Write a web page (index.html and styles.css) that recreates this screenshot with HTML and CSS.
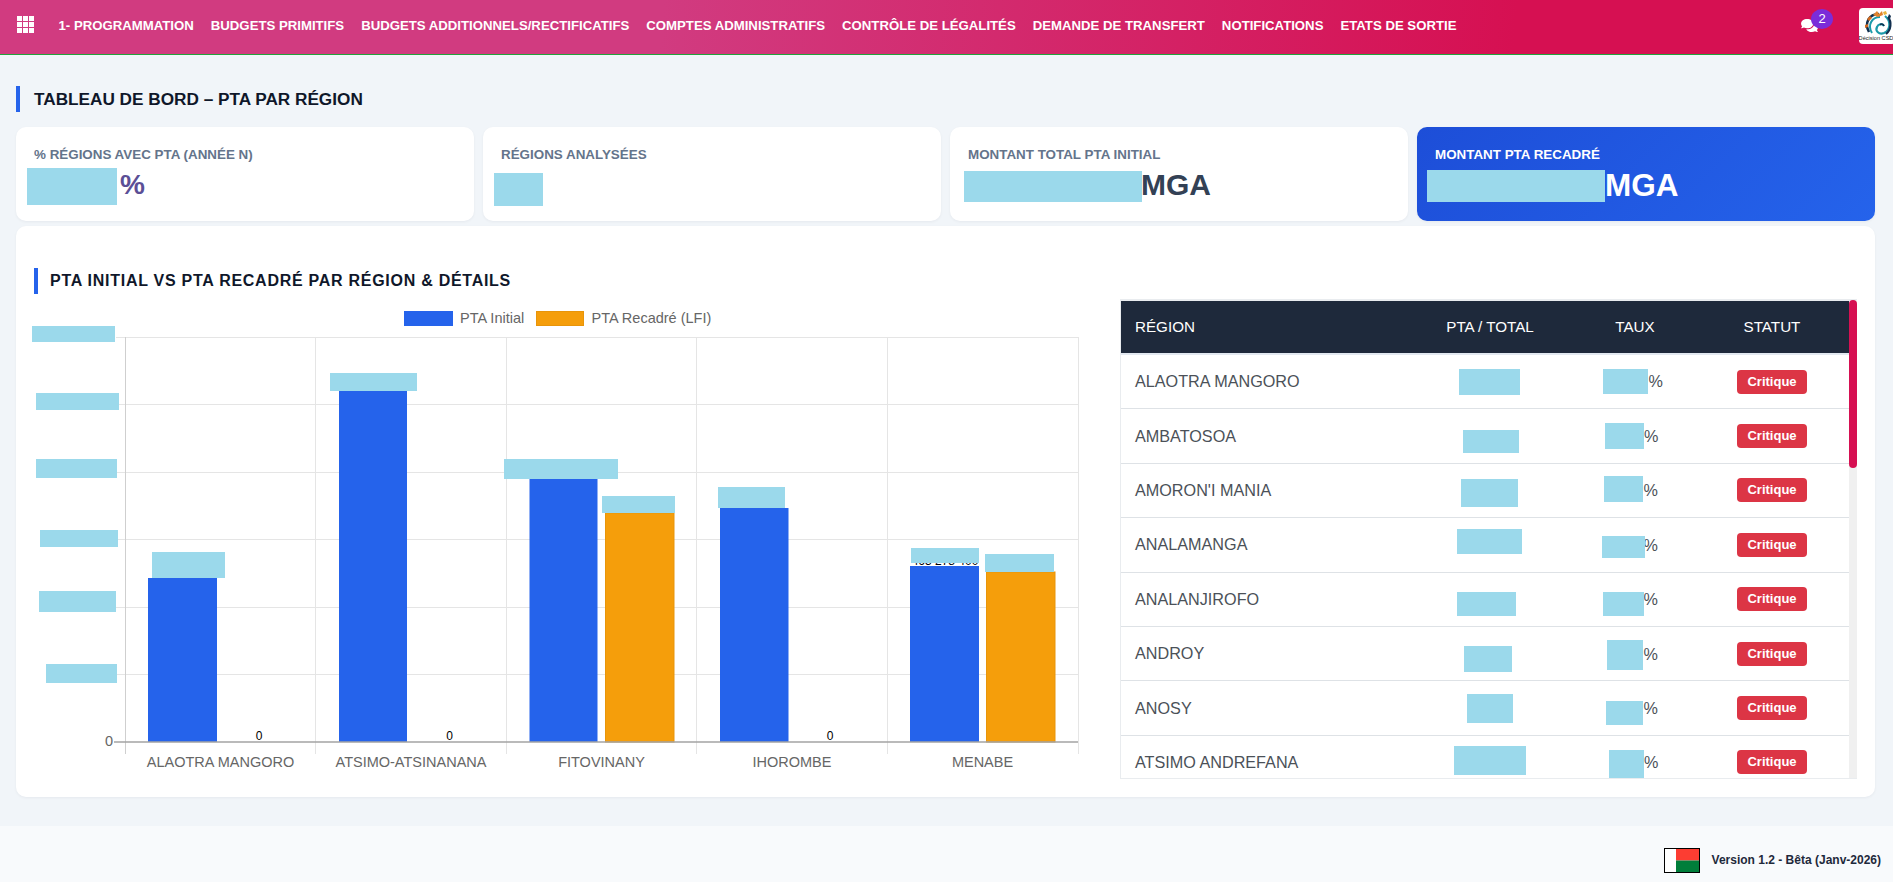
FILE: index.html
```html
<!DOCTYPE html>
<html lang="fr">
<head>
<meta charset="utf-8">
<title>Tableau de bord – PTA par région</title>
<link rel="stylesheet" href="styles.css">
</head>
<body>
<header class="topbar">
  <svg class="apps" viewBox="0 0 17 17" aria-hidden="true"><rect x="0" y="0" width="5" height="5"/><rect x="6" y="0" width="5" height="5"/><rect x="12" y="0" width="5" height="5"/><rect x="0" y="6" width="5" height="5"/><rect x="6" y="6" width="5" height="5"/><rect x="12" y="6" width="5" height="5"/><rect x="0" y="12" width="5" height="5"/><rect x="6" y="12" width="5" height="5"/><rect x="12" y="12" width="5" height="5"/></svg>
  <nav class="menu">
    <a>1- PROGRAMMATION</a>
    <a>BUDGETS PRIMITIFS</a>
    <a>BUDGETS ADDITIONNELS/RECTIFICATIFS</a>
    <a>COMPTES ADMINISTRATIFS</a>
    <a>CONTRÔLE DE LÉGALITÉS</a>
    <a>DEMANDE DE TRANSFERT</a>
    <a>NOTIFICATIONS</a>
    <a>ETATS DE SORTIE</a>
  </nav>
  <div class="chat">
    <svg class="chat-icon" viewBox="0 0 576 512" aria-hidden="true"><path d="M416 192c0-88.400-93.100-160-208-160S0 103.600 0 192c0 34.300 14.100 65.900 38 92-13.400 30.200-35.500 54.200-35.800 54.500-2.200 2.300-2.800 5.700-1.500 8.700S4.800 352 8 352c36.600 0 66.900-12.300 88.700-25 32.200 15.700 70.300 25 111.300 25 114.900 0 208-71.600 208-160zm122 220c23.900-26 38-57.700 38-92 0-66.900-53.500-124.200-129.300-148.100.9 6.600 1.300 13.300 1.300 20.100 0 105.900-107.700 192-240 192-10.800 0-21.300-.8-31.700-1.900C207.800 439.600 281.800 480 368 480c41 0 79.100-9.200 111.300-25 21.800 12.700 52.100 25 88.700 25 3.200 0 6.100-1.900 7.300-4.800 1.300-2.900.7-6.300-1.500-8.700-.3-.3-22.400-24.200-35.800-54.500z"/></svg>
    <span class="chat-badge">2</span>
  </div>
  <svg class="logo" viewBox="0 0 36 36" role="img" aria-label="Décision CSD">
    <rect width="36" height="36" rx="4" fill="#fff"/>
    <path d="M10 24C5 15 10 6 20 6" fill="none" stroke="#12304f" stroke-width="2.500"/>
    <path d="M13 25C8 17 13 9 21 9" fill="none" stroke="#1b9aaa" stroke-width="2"/>
    <path d="M26 8c6 5 6 14-1 17-5 2-9-2-7-6 1-3 5-4 7-1" fill="none" stroke="#1b9aaa" stroke-width="2.200"/>
    <path d="M29 9c4 5 3 13-2 17" fill="none" stroke="#12304f" stroke-width="2.200"/>
    <path d="M21 17c1.500-1.500 3.500-1 4 1" fill="none" stroke="#12304f" stroke-width="1.500"/>
    <path d="M14 7l4-4 2 3 3-3 1 4-5 2z" fill="#e0822d"/>
    <path d="M8 11l3-3 2 2-3 3zM6 17l3-1 0 3-3 1z" fill="#d2691e"/>
    <path d="M24 4l3-1 1 3-3 1z" fill="#e8b23a"/>
    <path d="M30 6l2 2-1 3-2-2z" fill="#12304f"/>
    <text class="logo-text" x="17" y="32" text-anchor="middle">Décision CSD</text>
  </svg>
</header>

<main class="content">
  <h1 class="page-title">TABLEAU DE BORD – PTA PAR RÉGION</h1>

  <section class="kpis">
    <article class="kpi">
      <div class="kpi-label">% RÉGIONS AVEC PTA (ANNÉE N)</div>
      <div class="kpi-value purple"><span class="redact k1"></span>%</div>
    </article>
    <article class="kpi">
      <div class="kpi-label">RÉGIONS ANALYSÉES</div>
      <div class="kpi-value"><span class="redact k2"></span></div>
    </article>
    <article class="kpi">
      <div class="kpi-label">MONTANT TOTAL PTA INITIAL</div>
      <div class="kpi-value"><span class="redact k3"></span>MGA</div>
    </article>
    <article class="kpi kpi-blue">
      <div class="kpi-label">MONTANT PTA RECADRÉ</div>
      <div class="kpi-value"><span class="redact k4"></span>MGA</div>
    </article>
  </section>

  <section class="panel">
    <h2 class="panel-title">PTA INITIAL VS PTA RECADRÉ PAR RÉGION &amp; DÉTAILS</h2>
    <div class="panel-body">
      <svg class="chart" viewBox="34 299 1086 480" role="img" aria-label="PTA Initial et PTA Recadré par région">
        <!-- legend -->
        <rect class="blue" x="404" y="311" width="49" height="15"/>
        <text class="axis" x="460" y="322.500">PTA Initial</text>
        <rect class="orange" x="536.500" y="311.500" width="47" height="14"/>
        <text class="axis" x="591.500" y="322.500">PTA Recadré (LFI)</text>
        <!-- grid -->
        <g class="grid">
          <path d="M116 337.500H1078M116 404.500H1078M116 472.500H1078M116 539.500H1078M116 607.500H1078M116 674.500H1078"/>
          <path d="M315.500 337V754M506.500 337V754M696.500 337V754M887.500 337V754M1078.500 337V754"/>
        </g>
        <path class="yaxis" d="M125.500 337V754"/>
        <!-- bars -->
        <rect class="blue" x="148" y="578" width="69" height="164"/>
        <rect class="blue" x="339" y="391" width="68" height="351"/>
        <rect class="blue" x="529.500" y="479" width="68" height="263"/>
        <rect class="orange" x="605.500" y="513" width="68.500" height="229"/>
        <rect class="blue" x="720" y="508" width="68.500" height="234"/>
        <rect class="blue" x="910" y="566" width="69" height="176"/>
        <rect class="orange" x="986.500" y="572" width="68.500" height="170"/>
        <path class="baseline" d="M114 742H1078"/>
        <!-- labels -->
        <text class="zero" x="259" y="740" text-anchor="middle">0</text>
        <text class="zero" x="449.500" y="740" text-anchor="middle">0</text>
        <text class="zero" x="830" y="740" text-anchor="middle">0</text>
        <text class="zero" x="945" y="564.500" text-anchor="middle">463 278 400</text>
        <text class="axis" x="113" y="746" text-anchor="end">0</text>
        <text class="axis" x="220.500" y="767" text-anchor="middle">ALAOTRA MANGORO</text>
        <text class="axis" x="411" y="767" text-anchor="middle">ATSIMO-ATSINANANA</text>
        <text class="axis" x="601.500" y="767" text-anchor="middle">FITOVINANY</text>
        <text class="axis" x="792" y="767" text-anchor="middle">IHOROMBE</text>
        <text class="axis" x="982.500" y="767" text-anchor="middle">MENABE</text>
        <!-- masked values -->
        <g class="mask">
          <rect x="32" y="326" width="83" height="16"/>
          <rect x="36" y="393" width="83" height="17"/>
          <rect x="36" y="459" width="81" height="19"/>
          <rect x="40" y="530" width="78" height="17"/>
          <rect x="39" y="591" width="77" height="21"/>
          <rect x="46" y="664" width="71" height="19"/>
          <rect x="152" y="552" width="73" height="26"/>
          <rect x="330" y="373" width="87" height="18"/>
          <rect x="504" y="459" width="114" height="20"/>
          <rect x="602" y="496" width="73" height="17"/>
          <rect x="718" y="487" width="67" height="21"/>
          <rect x="911" y="548" width="68" height="15"/>
          <rect x="985" y="554" width="69" height="18"/>
        </g>
      </svg>

      <div class="table-wrap">
        <table class="regions">
          <colgroup><col class="c-region"><col class="c-pta"><col class="c-taux"><col class="c-statut"></colgroup>
          <thead>
            <tr><th class="left">RÉGION</th><th>PTA / TOTAL</th><th>TAUX</th><th>STATUT</th></tr>
          </thead>
          <tbody>
            <tr><td>ALAOTRA MANGORO</td><td class="num"><span class="redact p1"></span></td><td class="num"><span class="redact t1"></span><span class="pct">%</span></td><td class="st"><span class="badge">Critique</span></td></tr>
            <tr><td>AMBATOSOA</td><td class="num"><span class="redact p2"></span></td><td class="num"><span class="redact t2"></span><span class="pct">%</span></td><td class="st"><span class="badge">Critique</span></td></tr>
            <tr><td>AMORON'I MANIA</td><td class="num"><span class="redact p3"></span></td><td class="num"><span class="redact t3"></span><span class="pct">%</span></td><td class="st"><span class="badge">Critique</span></td></tr>
            <tr><td>ANALAMANGA</td><td class="num"><span class="redact p4"></span></td><td class="num"><span class="redact t4"></span><span class="pct">%</span></td><td class="st"><span class="badge">Critique</span></td></tr>
            <tr><td>ANALANJIROFO</td><td class="num"><span class="redact p5"></span></td><td class="num"><span class="redact t5"></span><span class="pct">%</span></td><td class="st"><span class="badge">Critique</span></td></tr>
            <tr><td>ANDROY</td><td class="num"><span class="redact p6"></span></td><td class="num"><span class="redact t6"></span><span class="pct">%</span></td><td class="st"><span class="badge">Critique</span></td></tr>
            <tr><td>ANOSY</td><td class="num"><span class="redact p7"></span></td><td class="num"><span class="redact t7"></span><span class="pct">%</span></td><td class="st"><span class="badge">Critique</span></td></tr>
            <tr><td>ATSIMO ANDREFANA</td><td class="num"><span class="redact p8"></span></td><td class="num"><span class="redact t8"></span><span class="pct">%</span></td><td class="st"><span class="badge">Critique</span></td></tr>
          </tbody>
        </table>
        <div class="scroll-track"><div class="scroll-thumb"></div></div>
      </div>
    </div>
  </section>
</main>

<footer class="footer">
  <svg class="flag" viewBox="0 0 36 25" role="img" aria-label="Madagascar">
    <rect width="12" height="25" fill="#fff"/>
    <rect x="12" width="24" height="12.500" fill="#fc3d32"/>
    <rect x="12" y="12.500" width="24" height="12.500" fill="#007e3a"/>
    <rect x=".5" y=".5" width="35" height="24" fill="none" stroke="#000" stroke-width="1"/>
  </svg>
  <span class="version">Version 1.2 - Bêta (Janv-2026)</span>
</footer>
</body>
</html>
```
FILE: styles.css
```css
* { box-sizing: border-box; }
html, body { margin: 0; height: 882px; overflow: hidden; }
body {
  display: flex;
  flex-direction: column;
  background: #f1f5f9;
  font-family: "Liberation Sans", Arial, sans-serif;
  color: #0f172a;
}

/* top bar */
.topbar {
  flex: none;
  display: flex;
  align-items: center;
  height: 55px;
  padding-left: 17px;
  border-bottom: 1px solid #22a23c;
  background: linear-gradient(95deg, #d13b80 0%, #d13b80 35%, #d61052 80%, #d61052 100%);
  overflow: hidden;
}
.apps { width: 17px; height: 17px; fill: #fff; margin: -6px 24.500px 0 0; flex: none; }
.menu { display: flex; gap: 17px; }
.menu a { color: #fff; font-size: 13.200px; font-weight: 700; white-space: nowrap; line-height: 16px; margin-top: -3px; }
.chat { position: relative; margin-left: auto; width: 17px; height: 15px; margin-top: -4px; flex: none; }
.chat-icon { display: block; width: 17px; height: 15px; fill: #fff; }
.chat-badge {
  position: absolute;
  left: 10px;
  top: -9px;
  width: 22px;
  height: 20px;
  border-radius: 50%;
  background: #7b2cd9;
  color: #fff;
  font-size: 13px;
  line-height: 20px;
  text-align: center;
}
.logo { flex: none; width: 36px; height: 36px; margin: -2px -2px 0 41px; }
.logo-text { font-size: 5.600px; fill: #222; font-family: "Liberation Sans", Arial, sans-serif; }

/* content */
.content { flex: none; height: 771px; padding: 31px 18px 0 16px; }
.page-title {
  margin: 0 0 15px;
  height: 26px;
  padding-left: 14px;
  border-left: 4px solid #2563eb;
  font-size: 17.200px;
  line-height: 26px;
  font-weight: 700;
}
.kpis { display: grid; grid-template-columns: repeat(4, 458px); gap: 9px; }
.kpi {
  height: 94px;
  padding: 20px 18px 15px;
  background: #fff;
  border-radius: 10px;
  box-shadow: 0 1px 3px rgba(15, 23, 42, .05);
}
.kpi-label { height: 16px; font-size: 13.400px; line-height: 16px; font-weight: 700; color: #64748b; }
.kpi-value {
  display: flex;
  align-items: center;
  height: 40px;
  margin-top: 2px;
  font-size: 30px;
  font-weight: 700;
  color: #334155;
  white-space: nowrap;
}
.kpi-value.purple { color: #5b4f96; font-size: 28px; }
.kpi-blue { background: linear-gradient(135deg, #1d4ed8, #2563eb); }
.kpi-blue .kpi-label, .kpi-blue .kpi-value { color: #fff; }
.kpi-blue .kpi-value { font-size: 31.500px; }

/* masked values */
.redact { display: inline-block; flex: none; position: relative; background: #9bd9eb; vertical-align: middle; }
.k1 { width: 90px; height: 37px; margin: 0 3px 0 -7px; top: 1.500px; }
.k2 { width: 49px; height: 33px; margin-left: -7px; top: 4.500px; }
.k3 { width: 178px; height: 31px; margin: 0 -1px 0 -4px; top: 1.500px; }
.k4 { width: 178px; height: 32px; margin: 0 0 0 -8px; top: 1px; }
.p1 { width: 61px; height: 26px; margin-left: 54px; top: .5px; }
.p2 { width: 56px; height: 23px; margin-left: 58px; top: 5px; }
.p3 { width: 57px; height: 28px; margin-left: 56px; top: 3px; }
.p4 { width: 65px; height: 25px; margin-left: 52px; top: -3px; }
.p5 { width: 59px; height: 24px; margin-left: 52px; top: 5px; }
.p6 { width: 48px; height: 26px; margin-left: 59px; top: 5px; }
.p7 { width: 46px; height: 29px; margin-left: 62px; }
.p8 { width: 72px; height: 29px; margin-left: 49px; top: -2px; }
.t1 { width: 45px; height: 25px; margin: 0 .5px 0 28px; }
.t2 { width: 39px; height: 26px; margin-left: 30px; }
.t3 { width: 39px; height: 26px; margin: 0 .5px 0 29px; top: -1px; }
.t4 { width: 43px; height: 22px; margin: 0 -1.500px 0 27px; top: 2.600px; }
.t5 { width: 41px; height: 24px; margin: 0 -.5px 0 28px; top: 4.300px; }
.t6 { width: 36px; height: 30px; margin: 0 .5px 0 32px; top: 1px; }
.t7 { width: 37px; height: 24px; margin: 0 .5px 0 31px; top: 5px; }
.t8 { width: 35px; height: 28px; margin-left: 34px; top: 2px; }

/* panel */
.panel {
  height: 571px;
  margin-top: 5px;
  padding: 42px 18px 18px;
  background: #fff;
  border-radius: 10px;
  box-shadow: 0 1px 3px rgba(15, 23, 42, .05);
}
.panel-title {
  margin: 0 0 5px;
  height: 26px;
  padding-left: 12px;
  border-left: 4px solid #2563eb;
  font-size: 16px;
  line-height: 26px;
  font-weight: 700;
  letter-spacing: .73px;
}
.panel-body { display: flex; height: 480px; }

/* chart */
.chart { flex: none; display: block; width: 1086px; height: 480px; overflow: visible; }
.chart .blue { fill: #2563eb; }
.chart .orange { fill: #f59e0b; stroke: #e8950a; stroke-width: 1px; }
.chart .grid path { fill: none; stroke: #e5e5e5; stroke-width: 1px; }
.chart .yaxis { fill: none; stroke: #cfcfcf; stroke-width: 1px; }
.chart .baseline { fill: none; stroke: #a3a3a3; stroke-width: 1.500px; }
.chart .axis { font-size: 14.500px; fill: #666; }
.chart .zero { font-size: 12px; fill: #000; }
.chart .mask rect { fill: #9bd9eb; }

/* table */
.table-wrap {
  position: relative;
  flex: none;
  width: 737px;
  height: 480px;
  overflow: hidden;
  border: solid #e9ecef;
  border-width: 1px 0 1px 1px;
  background: #fff;
}
.scroll-track { position: absolute; top: 0; right: 0; bottom: 0; width: 8px; background: #f0f0f0; }
.scroll-thumb { height: 168px; background: #d61052; border-radius: 4px; }
.regions { width: 728px; table-layout: fixed; border-collapse: separate; border-spacing: 0; font-size: 16.200px; color: #4b5158; }
.c-region { width: 284px; }
.c-pta { width: 170px; }
.c-taux { width: 120px; }
.c-statut { width: 154px; }
.regions th {
  height: 55px;
  padding: 0 0 2px;
  border-top: 1px solid #e9ecef;
  border-bottom: 2px solid #e2e8f0;
  background: #1e293b;
  background-clip: padding-box;
  color: #fff;
  font-size: 15.200px;
  font-weight: 400;
  text-align: center;
}
.regions th.left { text-align: left; padding-left: 14px; }
.regions td { height: 54.400px; padding: 0 0 0 14px; border-bottom: 1px solid #dee2e6; white-space: nowrap; }
.regions td.num { padding: 0; text-align: left; }
.regions td.st { padding: 0; text-align: center; }
.pct { vertical-align: middle; }
.badge {
  display: inline-block;
  width: 70px;
  height: 24px;
  border-radius: 4px;
  background: #dc3545;
  color: #fff;
  font-size: 13px;
  font-weight: 700;
  line-height: 24px;
  text-align: center;
}

/* footer */
.footer {
  flex: 1;
  display: flex;
  justify-content: flex-end;
  align-items: flex-start;
  gap: 12px;
  padding: 22px 12px 0 0;
  background: #f8fafc;
}
.flag { flex: none; display: block; width: 36px; height: 25px; }
.version { font-size: 12px; font-weight: 700; color: #1e293b; line-height: 20px; padding-top: 1.500px; }
```
